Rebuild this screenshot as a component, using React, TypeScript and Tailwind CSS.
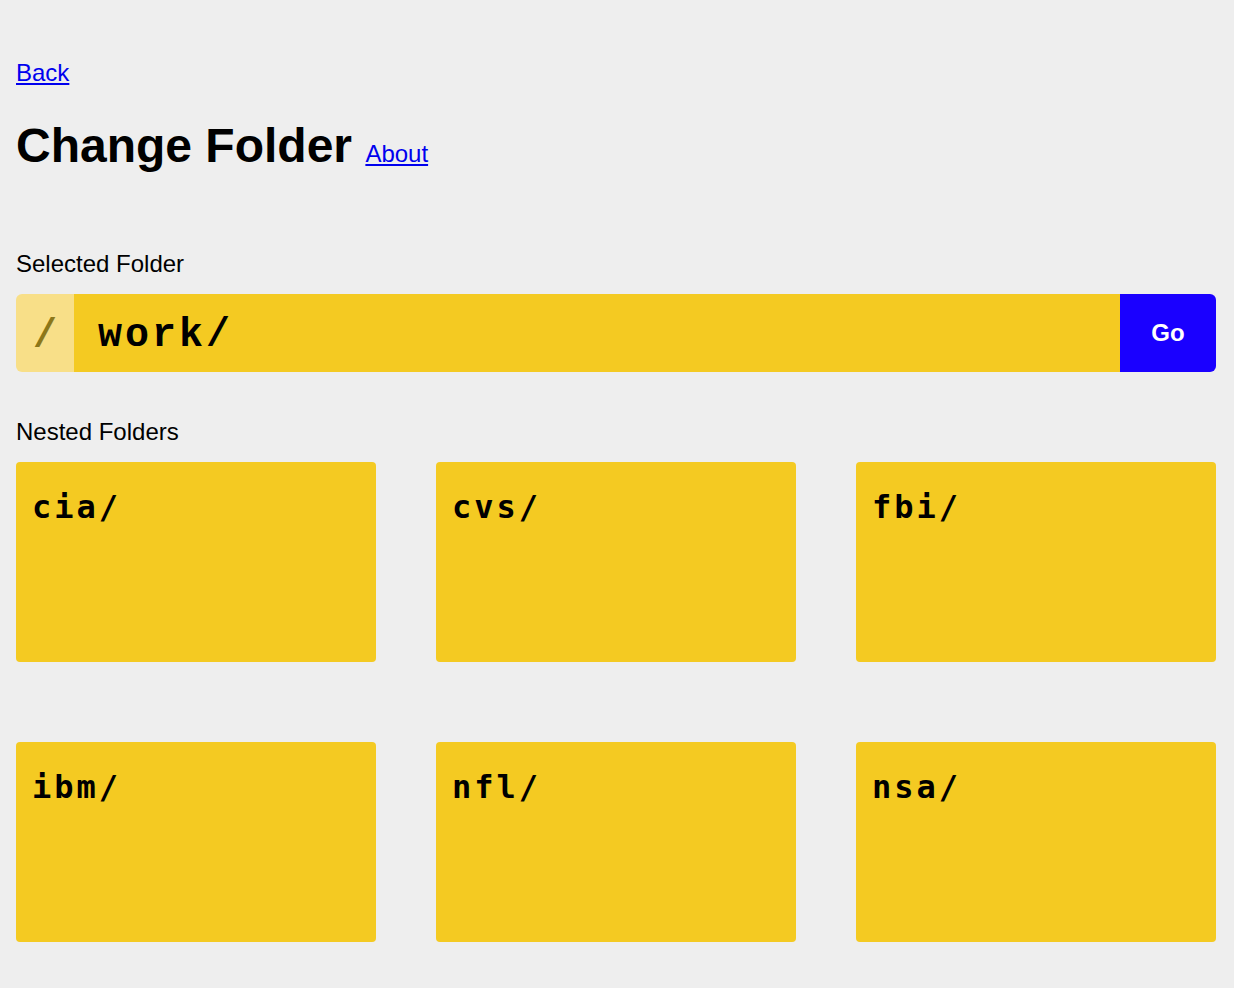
import React from "react";

const folders = ["cia/", "cvs/", "fbi/", "ibm/", "nfl/", "nsa/"];

export default function App() {
  return (
    <div className="min-h-screen bg-[#eeeeee] px-4 pt-[59px] pb-10 font-['Liberation_Sans',Arial,sans-serif] text-black">
      <div className="max-w-[1200px]">
        <div className="h-[28px] text-[24px] leading-[28px]">
          <a href="#" className="text-[#0000ee] underline">
            Back
          </a>
        </div>
        <h1 className="mt-[31px] text-[48px] font-bold leading-[55px]">
          Change Folder{" "}
          <a href="#" className="text-[24px] font-normal text-[#0000ee] underline">
            About
          </a>
        </h1>

        <div className="mt-[69px] text-[24px] leading-[28px]">Selected Folder</div>
        <div className="mt-4 flex h-[78px] overflow-hidden rounded-[6px]">
          <div className="flex w-[58px] items-center justify-center bg-[#f8df88] pt-[8px] font-['Liberation_Mono',monospace] text-[40px] font-bold text-[#8c7719]">
            /
          </div>
          <div className="flex flex-1 items-center bg-[#f4ca22] pl-6 pt-[6px] font-['Liberation_Mono',monospace] text-[40px] font-bold tracking-[3px]">
            work/
          </div>
          <button className="w-[96px] bg-[#1a00ff] text-[24px] font-bold text-white">Go</button>
        </div>

        <div className="mt-[46px] text-[24px] leading-[28px]">Nested Folders</div>
        <div className="mt-4 grid grid-cols-3 gap-x-[60px] gap-y-[80px]">
          {folders.map((f) => (
            <div
              key={f}
              className="h-[200px] rounded-[4px] bg-[#f4ca22] px-4 pt-[27px] font-['DejaVu_Sans_Mono',monospace] text-[32px] font-bold leading-[37px] tracking-[3px]"
            >
              {f}
            </div>
          ))}
        </div>
      </div>
    </div>
  );
}
